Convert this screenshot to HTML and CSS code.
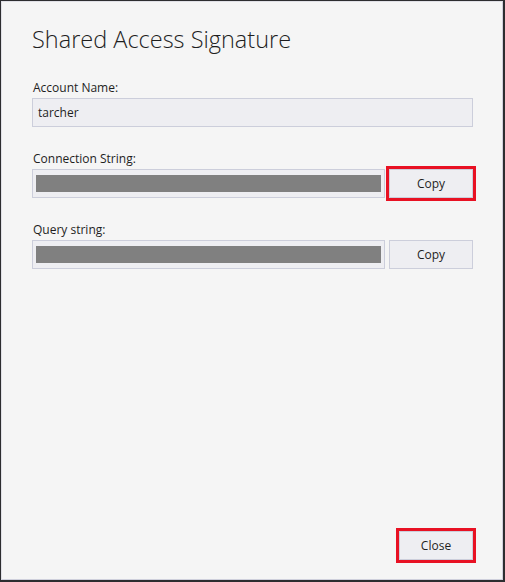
FILE: index.html
```html
<!DOCTYPE html>
<html>
<head>
<meta charset="utf-8">
<link rel="stylesheet" href="styles.css">
</head>
<body>
<div class="dialog">
  <h1 class="title">Shared Access Signature</h1>
  <div class="field">
    <label class="label">Account Name:</label>
    <div class="input">tarcher</div>
  </div>
  <div class="field">
    <label class="label">Connection String:</label>
    <div class="row">
      <div class="input masked"><span class="mask"></span></div>
      <button class="btn copy highlight">Copy</button>
    </div>
  </div>
  <div class="field">
    <label class="label">Query string:</label>
    <div class="row">
      <div class="input masked"><span class="mask"></span></div>
      <button class="btn copy">Copy</button>
    </div>
  </div>
  <div class="spacer"></div>
  <div class="footer">
    <button class="btn close highlight">Close</button>
  </div>
</div>
</body>
</html>
```

FILE: styles.css
```css
html, body {
  margin: 0;
  padding: 0;
  background: #2d2d30;
}
body {
  padding: 1px 0 0 1px;
  font-family: "Open Sans", "Noto Sans", sans-serif;
  font-size: 12px;
  color: #1e1e1e;
}
.dialog {
  box-sizing: border-box;
  width: 502px;
  height: 579px;
  background: #f5f5f5;
  border: 1px solid #cfd0dc;
  border-left-color: #e0e0e6;
  border-top-color: #e0e0e6;
  padding: 20px 29px 19px 30px;
  display: flex;
  flex-direction: column;
}
.title {
  margin: 0 0 24px 0;
  font-weight: 300;
  font-size: 23.5px;
  line-height: 34px;
  color: #1e1e1e;
}
.field {
  display: flex;
  flex-direction: column;
  margin-bottom: 24px;
}
.label {
  display: block;
  line-height: 16px;
  margin-bottom: 2px;
  padding-left: 1px;
  color: #1e1e1e;
}
.input {
  box-sizing: border-box;
  height: 29px;
  background: #eeeef2;
  border: 1px solid #cccedb;
  padding: 0 5px;
  line-height: 27px;
  font-size: 12px;
}
.row {
  display: flex;
  gap: 4px;
}
.masked {
  flex: 1;
  padding: 5px 3px 5px 3px;
  display: flex;
}
.mask {
  flex: 1;
  background: #808080;
  height: 17px;
}
.btn {
  box-sizing: border-box;
  background: #eeeef2;
  border: 1px solid #cccedb;
  font-family: inherit;
  font-size: 12px;
  color: #1e1e1e;
  padding: 0;
  margin: 0;
}
.copy {
  width: 84px;
  height: 29px;
}
.highlight {
  outline: 3px solid #e81123;
  outline-offset: 0;
}
.spacer {
  flex: 1;
}
.footer {
  display: flex;
  justify-content: flex-end;
}
.close {
  width: 74px;
  height: 29px;
}
```
